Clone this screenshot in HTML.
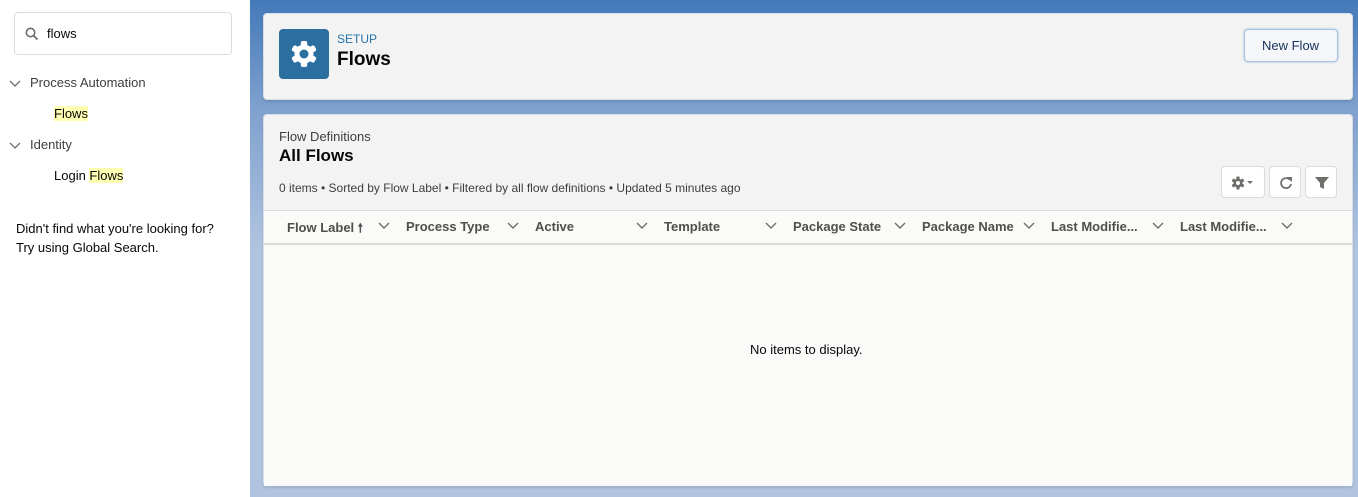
<!DOCTYPE html>
<html><head><style>
*{box-sizing:border-box;margin:0;padding:0}
body{width:1358px;height:497px;overflow:hidden;font-family:"Liberation Sans",sans-serif;color:#080707;position:relative;background:#fff}
.left{position:absolute;left:0;top:0;width:250px;height:497px;background:#fff}
.main{position:absolute;left:250px;top:0;width:1108px;height:497px;background:linear-gradient(#4379b9 0px,#7fa1cf 110px,#b0c4df 250px,#b0c4df 497px)}
.search{position:absolute;left:14px;top:12px;width:218px;height:43px;border:1px solid #dddbda;border-radius:4px}
.t{position:absolute;font-size:13px;white-space:nowrap}
.hl{background:#ffffb3}
.card{position:absolute;background:#f3f3f3;border-radius:4px;border:1px solid #d8dde6;box-shadow:0 2px 2px rgba(0,0,0,.1)}
.th{position:absolute;top:219px;font-size:13px;font-weight:bold;color:#514f4d}
.btn{position:absolute;background:#fff;border:1px solid #dddbda;border-radius:4px}
</style></head><body>
<div class="left">
 <div class="search">
  <svg style="position:absolute;left:10px;top:14px" width="14" height="14" viewBox="0 0 14 14"><circle cx="5.5" cy="5.5" r="4.2" fill="none" stroke="#706e6b" stroke-width="1.6"/><path d="M8.6 8.6L12.5 12.5" stroke="#706e6b" stroke-width="1.8"/></svg>
  <span class="t" style="left:32px;top:13px;color:#080707">flows</span>
 </div>
 <svg style="position:absolute;left:9px;top:79px" width="12" height="9"><path d="M1 2l5 5 5-5" fill="none" stroke="#706e6b" stroke-width="1.3"/></svg>
 <span class="t" style="left:30px;top:75px;color:#3e3e3c">Process Automation</span>
 <span class="t" style="left:54px;top:106px"><span class="hl">Flows</span></span>
 <svg style="position:absolute;left:9px;top:141px" width="12" height="9"><path d="M1 2l5 5 5-5" fill="none" stroke="#706e6b" stroke-width="1.3"/></svg>
 <span class="t" style="left:30px;top:137px;color:#3e3e3c">Identity</span>
 <span class="t" style="left:54px;top:168px">Login <span class="hl">Flows</span></span>
 <span class="t" style="left:16px;top:221px">Didn't find what you're looking for?</span>
 <span class="t" style="left:16px;top:240px">Try using Global Search.</span>
</div>
<div class="main"></div>
<div class="card" style="left:263px;top:13px;width:1090px;height:87px">
 <div style="position:absolute;left:15px;top:15px;width:50px;height:50px;background:#2a6fa0;border-radius:4px">
  <svg width="50" height="50" viewBox="0 0 50 50"><g transform="translate(25 25)" fill="#fff"><circle r="9.5"/><g id="k"><rect x="-3.2" y="-13" width="6.4" height="7" rx="2"/></g><use href="#k" transform="rotate(60)"/><use href="#k" transform="rotate(120)"/><use href="#k" transform="rotate(180)"/><use href="#k" transform="rotate(240)"/><use href="#k" transform="rotate(300)"/><circle r="4.5" fill="#2a6fa0"/></g></svg>
 </div>
 <span class="t" style="left:73px;top:18px;font-size:12px;color:#2574a9">SETUP</span>
 <span class="t" style="left:73px;top:35px;font-size:19px;font-weight:bold">Flows</span>
 <div class="btn" style="left:980px;top:15px;width:94px;height:33px;background:#f4f6f9;border:1px solid #a8c1e0;box-shadow:0 0 2px #9ab8de"><span class="t" style="left:17px;top:8px;color:#16325c">New Flow</span></div>
</div>
<div class="card" style="left:263px;top:114px;width:1090px;height:372px">
 <span class="t" style="left:15px;top:14px;color:#3e3e3c">Flow Definitions</span>
 <span class="t" style="left:15px;top:31px;font-size:17px;font-weight:bold">All Flows</span>
 <span class="t" style="left:15px;top:66px;font-size:12px;color:#3e3e3c">0 items • Sorted by Flow Label • Filtered by all flow definitions • Updated 5 minutes ago</span>
 <div class="btn" style="left:957px;top:51px;width:44px;height:32px"><svg style="position:absolute;left:9px;top:9px" width="26" height="14" viewBox="0 0 26 14"><g transform="translate(7 7)" fill="#706e6b"><circle r="4.5"/><g id="k2"><rect x="-1.6" y="-6.5" width="3.2" height="3.5" rx="0.8"/></g><use href="#k2" transform="rotate(60)"/><use href="#k2" transform="rotate(120)"/><use href="#k2" transform="rotate(180)"/><use href="#k2" transform="rotate(240)"/><use href="#k2" transform="rotate(300)"/><circle r="2" fill="#fff"/></g><path d="M16 5h6l-3 3z" fill="#706e6b"/></svg></div>
 <div class="btn" style="left:1005px;top:51px;width:32px;height:32px"><svg style="position:absolute;left:8px;top:8px" width="16" height="16" viewBox="0 0 16 16"><path d="M12 5A5 5 0 1 0 13 9" fill="none" stroke="#706e6b" stroke-width="1.8"/><path d="M9 2h5v5z" fill="#706e6b"/></svg></div>
 <div class="btn" style="left:1041px;top:51px;width:32px;height:32px"><svg style="position:absolute;left:8px;top:8px" width="16" height="16" viewBox="0 0 16 16"><path d="M1 2h14l-5 6v6l-4-2V8z" fill="#706e6b"/></svg></div>
 <div style="position:absolute;left:0;top:95px;width:1088px;height:276px;background:#fafaf9;border-top:1px solid #dddbda"></div>
 <div style="position:absolute;left:0;top:128px;width:1088px;height:2px;background:#dddbda"></div>
 <span class="t" style="left:486px;top:227px;color:#080707">No items to display.</span>
</div>
<div class="th" style="left:287px">Flow Label <span style="font-size:12px">🠕</span></div>
<div class="th" style="left:406px">Process Type</div>
<div class="th" style="left:535px">Active</div>
<div class="th" style="left:664px">Template</div>
<div class="th" style="left:793px">Package State</div>
<div class="th" style="left:922px">Package Name</div>
<div class="th" style="left:1051px">Last Modifie...</div>
<div class="th" style="left:1180px">Last Modifie...</div>
<svg style="position:absolute;left:0;top:0;pointer-events:none" width="1358" height="497"><g fill="none" stroke="#706e6b" stroke-width="1.4">
<path d="M379 223l5 5 5-5"/><path d="M508 223l5 5 5-5"/><path d="M637 223l5 5 5-5"/><path d="M766 223l5 5 5-5"/><path d="M895 223l5 5 5-5"/><path d="M1024 223l5 5 5-5"/><path d="M1153 223l5 5 5-5"/><path d="M1282 223l5 5 5-5"/></g></svg>
</body></html>
